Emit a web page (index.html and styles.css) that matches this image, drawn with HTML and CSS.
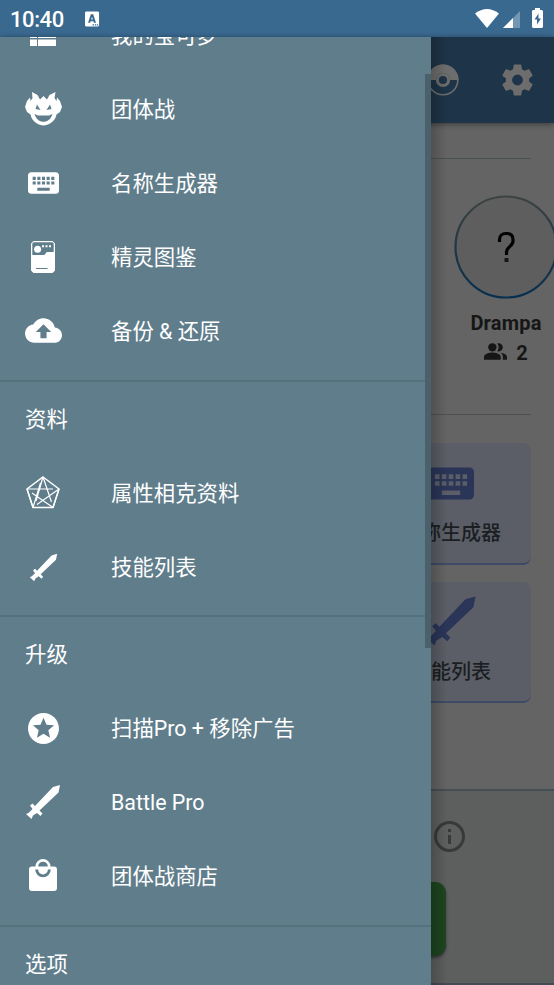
FILE: index.html
```html
<!DOCTYPE html>
<html lang="zh-CN">
<head>
<meta charset="utf-8">
<title>Menu</title>
<link rel="stylesheet" href="styles.css">
</head>
<body>
<svg class="defs" width="0" height="0">
  <symbol id="keyboard" viewBox="0 0 24 24"><path d="M20 5H4c-1.100 0-2 .9-2 2v10c0 1.100.9 2 2 2h16c1.100 0 2-.9 2-2V7c0-1.100-.9-2-2-2zm-9 3h2v2h-2V8zm0 3h2v2h-2v-2zM8 8h2v2H8V8zm0 3h2v2H8v-2zm-1 2H5v-2h2v2zm0-3H5V8h2v2zm9 7H8v-2h8v2zm0-4h-2v-2h2v2zm0-3h-2V8h2v2zm3 3h-2v-2h2v2zm0-3h-2V8h2v2z"/></symbol>
  <symbol id="sword" viewBox="0 0 36 36"><path d="M35 1 33.500 8.500 14.500 26.500 17.500 29.500 15.500 32 12 29 8 31.500 6.500 35 1 30 3.500 29 7.500 25 5 21.500 7.500 19.500 10 22 28 3Z"/></symbol>
</svg>
<div class="screen">
  <header class="status">
    <span class="clock">10:40</span>
    <svg class="badge" viewBox="0 0 16 16"><path fill-rule="evenodd" d="M2 0h12l1 1v14l-1 1H1l-1-1V1l1-1zM6.200 3 3.300 12h2.200l.5-1.700h3l.5 1.700h2.200L8.800 3zm1.300 2.500.9 3H6.600zM8 13.500V15h1.500v-1.500zm2.500 0V15H12v-1.500zm2.300 0V15H14v-1.500z"/></svg>
    <span class="spacer"></span>
    <svg class="wifi" viewBox="0 0 24 19"><path d="M0 4.500Q12-4.500 24 4.500L12 19Z"/></svg>
    <svg class="signal" viewBox="0 0 17 17"><path opacity=".3" d="M17 0v17H0Z"/><path d="M10 7v10H0Z"/></svg>
    <svg class="battery" viewBox="0 0 11 20"><path fill-rule="evenodd" d="M3 0h5v2h2l1 1v16l-1 1H1l-1-1V3l1-1h2zM6.500 5.500 2.500 11.500H5V16.500L9 10.500H6.500z"/></svg>
  </header>

  <main class="page">
    <div class="toolbar">
      <svg class="ball" viewBox="0 0 32 32"><circle cx="16" cy="16" r="14.800" fill="none" stroke="currentColor" stroke-width="1.600"/><path d="M.5 16a15.500 15.500 0 0 1 31 0H23a7 7 0 0 0-14 0z"/><circle cx="16" cy="16" r="5.600" fill="none" stroke="currentColor" stroke-width="3"/></svg>
      <svg class="gear" viewBox="2 2 20 20"><path d="M19.430 12.980c.04-.32.07-.64.07-.98s-.03-.66-.07-.98l2.110-1.650c.19-.15.24-.42.12-.64l-2-3.460c-.12-.22-.39-.3-.61-.22l-2.490 1c-.52-.4-1.080-.73-1.690-.98l-.38-2.650C14.460 2.180 14.250 2 14 2h-4c-.25 0-.46.18-.49.42l-.38 2.650c-.61.25-1.170.59-1.690.98l-2.490-1c-.23-.09-.49 0-.61.22l-2 3.460c-.13.22-.07.49.12.64l2.110 1.650c-.04.32-.07.65-.07.98s.03.66.07.98l-2.110 1.650c-.19.15-.24.42-.12.64l2 3.460c.12.22.39.3.61.22l2.490-1c.52.4 1.080.73 1.690.98l.38 2.650c.03.24.24.42.49.42h4c.25 0 .46-.18.49-.42l.38-2.650c.61-.25 1.170-.59 1.690-.98l2.490 1c.23.09.49 0 .61-.22l2-3.460c.12-.22.07-.49-.12-.64zM12 15.500a3.500 3.500 0 1 1 0-7 3.500 3.500 0 0 1 0 7z"/></svg>
    </div>
    <hr class="rule first">
    <section class="mon">
      <svg class="ring" viewBox="0 0 104 104"><defs><linearGradient id="rg" x1="0" y1="0" x2="0" y2="1"><stop offset="0" stop-color="#3e4344"/><stop offset=".5" stop-color="#203645"/><stop offset="1" stop-color="#062f50"/></linearGradient></defs><circle cx="52" cy="52" r="50.500" fill="#5e5e5e" stroke="url(#rg)" stroke-width="2.200"/><path d="M45.500 47v-2.500c0-3.500 2.500-6 6.500-6h1c4 0 6 2.500 6 6v2c0 4-6.500 6-6.500 10.500v3" fill="none" stroke="#000" stroke-width="3.200"/><path d="M50.500 63h4v4h-4z"/></svg>
      <div class="name">Drampa</div>
      <div class="count"><svg viewBox="1 4 22 16"><path d="M16.670 13.130C18.040 14.060 19 15.320 19 17v3h4v-3c0-2.180-3.570-3.470-6.330-3.870zM15 12c2.210 0 4-1.790 4-4s-1.790-4-4-4c-.47 0-.91.1-1.330.24C14.500 5.270 15 6.580 15 8s-.5 2.730-1.330 3.760c.42.14.86.24 1.330.24z"/><circle cx="9" cy="8" r="4"/><path d="M9 13c-2.670 0-8 1.340-8 4v3h16v-3c0-2.660-5.330-4-8-4z"/></svg><span>2</span></div>
    </section>
    <hr class="rule">
    <section class="tiles">
      <div class="tile"><svg class="tk" viewBox="2 5 20 14"><use href="#keyboard" width="24" height="24"/></svg><span>名称生成器</span></div>
      <div class="tile second"><svg class="ts"><use href="#sword"/></svg><span>技能列表</span></div>
    </section>
    <footer class="bottom">
      <svg class="info" viewBox="0 0 31 31"><circle cx="15.500" cy="15.500" r="14" fill="none" stroke="currentColor" stroke-width="3"/><path d="M14 8h3v3h-3zM14 14h3v9h-3z"/></svg>
      <div class="action"></div>
    </footer>
  </main>

  <nav class="drawer">
    <div class="list">
      <div class="group">
        <div class="row"><span class="slot"><svg class="i-list" viewBox="0 0 26 22"><path d="M0 0h7v6H0zM8 0h18v6H8zM0 7.500h7v6.500H0zM8 7.500h18v6.500H8zM0 15.500h7V22H0zM8 15.500h18V22H8z"/></svg></span>我的宝可梦</div>
        <div class="row"><span class="slot"><svg class="i-dragon" viewBox="0 0 37 34"><path fill-rule="evenodd" d="M7 0 12.500 3 15 7.500 18.500 4 22 7.500 24.500 3 30.500 0 29.500 6 31.500 9 32 5.500 35 9 37 15 35 20 31.500 22.500C30 30 23 33.500 18.500 33.500S7 30 5.500 22.500L2 20 0 15 2 9 5 5.500 5.500 9 7.500 6ZM12 12.500 15.500 18 10.500 17ZM25 12.500 21.500 18 26.500 17ZM9.500 22C11 27 14.500 29.800 18.500 29.800S26 27 27.500 22L24 23.500H13Z"/></svg></span>团体战</div>
        <div class="row"><span class="slot"><svg class="i-keyboard" viewBox="2 5 20 14"><use href="#keyboard" width="24" height="24"/></svg></span>名称生成器</div>
        <div class="row"><span class="slot"><svg class="i-dex" viewBox="0 0 24 32"><path fill-rule="evenodd" d="M2.500 0h19L24 2.500v27L21.500 32h-19L0 29.500v-27zM2.500 1.300 1.300 2.500V14h12l2.500-3h6.900V2.500L21.500 1.300zM5 27v1h11.500v-1z"/><circle cx="6.600" cy="8.200" r="3.500"/><path d="M11 4.200h2v2h-2zm3.500 0h2v2h-2zm3.500 0h2v2h-2z"/></svg></span>精灵图鉴</div>
        <div class="row"><span class="slot"><svg class="i-cloud" viewBox="0 4 24 16"><path d="M19.350 10.040C18.670 6.590 15.640 4 12 4 9.110 4 6.600 5.640 5.350 8.040 2.340 8.360 0 10.910 0 14c0 3.310 2.690 6 6 6h13c2.760 0 5-2.240 5-5 0-2.640-2.050-4.780-4.650-4.960zM14 13v4h-4v-4H7l5-5 5 5h-3z"/></svg></span>备份 &amp; 还原</div>
      </div>
      <div class="group">
        <h2>资料</h2>
        <div class="row"><span class="slot"><svg class="i-penta" viewBox="0 0 34 33"><path stroke-width="1.500" d="M17 1 33 13 27 31.500H7L1 13Z"/><path stroke-width="1.200" d="M17 1 10 25M17 1l8.500 25M1 13h26M33 13 11 28.500M6 17l21 14.500M7 31.500 14.500 7M7 31.500 1 13M33 13l-6 18.500"/></svg></span>属性相克资料</div>
        <div class="row"><span class="slot"><svg class="i-sword-s"><use href="#sword"/></svg></span>技能列表</div>
      </div>
      <div class="group">
        <h2>升级</h2>
        <div class="row"><span class="slot"><svg class="i-star" viewBox="2 2 20 20"><path d="M11.990 2C6.470 2 2 6.480 2 12s4.470 10 9.990 10C17.520 22 22 17.520 22 12S17.520 2 11.990 2zm4.240 16L12 15.450 7.770 18l1.120-4.810-3.730-3.230 4.920-.42L12 5l1.920 4.530 4.920.42-3.730 3.230L16.230 18z"/></svg></span>扫描Pro + 移除广告</div>
        <div class="row"><span class="slot"><svg class="i-sword"><use href="#sword"/></svg></span>Battle Pro</div>
        <div class="row"><span class="slot"><svg class="i-bag" viewBox="0 0 28 32"><path fill-rule="evenodd" d="M3 7.500h3.500a7.500 7.500 0 0 1 15 0H25a3 3 0 0 1 3 3V29a3 3 0 0 1-3 3H3a3 3 0 0 1-3-3V10.500a3 3 0 0 1 3-3zm6.200 0h9.600a4.800 4.800 0 0 0-9.600 0zM6.200 10.500a7.800 7.800 0 0 0 15.600 0h-2.900a4.900 4.900 0 0 1-9.800 0z"/></svg></span>团体战商店</div>
      </div>
      <div class="group"><h2>选项</h2></div>
    </div>
    <div class="thumb"></div>
  </nav>
</div>
</body>
</html>
```
FILE: styles.css
```css
* { box-sizing: border-box; }
body { margin: 0; font-family: Roboto, "Noto Sans CJK SC", sans-serif; }
svg { display: block; fill: currentColor; flex: none; }
.defs { position: absolute; }
.screen { position: relative; width: 554px; height: 985px; overflow: hidden; display: flex; flex-direction: column; background: #646464; }

.status { height: 37px; flex: none; display: flex; align-items: center; background: #3a6990; color: #fff; padding: 0 11px 0 10px; }
.clock { font-size: 22px; font-weight: 500; letter-spacing: -.4px; line-height: 37px; padding-top: 2px; }
.badge { width: 15px; height: 16px; margin-left: 21px; }
.spacer { flex: 1; }
.wifi { width: 24px; height: 19px; margin-top: -1px; }
.signal { width: 17px; height: 17px; margin: 2px 12px 0 4px; }
.battery { width: 11px; height: 20px; margin-top: -1px; }

.page { flex: 1; min-height: 0; display: flex; flex-direction: column; }
.toolbar { height: 86px; flex: none; display: flex; justify-content: flex-end; align-items: center; gap: 43px; padding-right: 21px; background: #1e3448; color: #6d6d6d; box-shadow: 0 1px 6px rgba(0,0,0,.45); }
.ball { width: 32px; height: 32px; }
.gear { width: 31px; height: 32px; }
.rule { flex: none; width: 508px; height: 1px; border: 0; background: #505050; margin: 0 0 0 23px; }
.rule.first { margin-top: 35px; background: #4b5252; }
.mon { flex: none; height: 255px; align-self: flex-end; width: 104px; margin-right: -4px; padding-top: 36px; display: flex; flex-direction: column; align-items: center; color: #161616; font-weight: 700; font-size: 20px; }
.ring { width: 104px; height: 104px; }
.name { line-height: 28px; margin-top: 10px; letter-spacing: .2px; }
.count { display: flex; align-items: center; gap: 9px; height: 28px; padding-top: 3px; }
.count svg { width: 23px; height: 17px; margin-top: -2px; }
.tiles { flex: none; display: flex; flex-direction: column; align-items: flex-end; gap: 17px; padding: 28px 23px 0 0; height: 375px; }
.tile { width: 160px; height: 122px; flex: none; border-radius: 8px; border-bottom: 2px solid #3e4b66; background: #5b5e67; color: #2a3558; display: flex; flex-direction: column; align-items: center; padding-top: 24px; font-size: 20px; font-weight: 500; }
.tile.second { height: 121px; padding-top: 13px; }
.tile span { color: #1b1e22; line-height: 30px; margin-top: 18px; }
.tile.second span { margin-top: 10px; }
.tk { width: 46px; height: 33px; }
.ts { width: 54px; height: 52px; }
.bottom { flex: 1; margin-top: -1px; border-top: 2px solid #464e55; border-bottom: 2px solid #444b52; background: #5d5f5e; padding: 30px 0 0 434px; color: #393939; }
.info { width: 31px; height: 31px; }
.action { width: 338px; height: 74px; margin: 30px 0 0 -326px; border-radius: 11px; background: #1d451f; box-shadow: 0 2px 3px rgba(0,0,0,.4); }

.drawer { position: absolute; left: 0; top: 37px; width: 431px; height: 948px; overflow: hidden; background: #607d8b; color: #fff; font-size: 21.4px; }
.screen::after { content: ""; position: absolute; left: 431px; top: 37px; width: 16px; height: 948px; background: linear-gradient(90deg, rgba(0,0,0,.2), transparent); }
.list { margin-top: -39px; }
.group { padding-bottom: 12px; }
.group + .group { border-top: 2px solid #56717e; padding-bottom: 11px; }
.group + .group + .group { padding-bottom: 12px; }
.row { display: flex; align-items: center; height: 74px; line-height: 32px; padding-top: 2px; }
.slot { width: 86px; margin: -2px 25px 0 0; display: flex; justify-content: center; }
h2 { margin: 0; padding-left: 25px; height: 74px; line-height: 76px; font-size: inherit; font-weight: 400; }
.thumb { position: absolute; right: 0; top: 37px; width: 6px; height: 574px; background: #4a606b; }
.i-list { width: 26px; height: 22px; }
.i-dragon { width: 37px; height: 34px; }
.i-keyboard { width: 31px; height: 22px; }
.i-dex { width: 24px; height: 32px; }
.i-cloud { width: 37px; height: 25px; margin-top: -1px; }
.i-penta { width: 34px; height: 33px; margin-top: -1px; fill: none; stroke: currentColor; }
.i-sword-s { width: 29px; height: 29px; }
.i-sword { width: 36px; height: 36px; }
.i-star { width: 31px; height: 31px; }
.i-bag { width: 28px; height: 32px; margin-top: -2px; }
```
